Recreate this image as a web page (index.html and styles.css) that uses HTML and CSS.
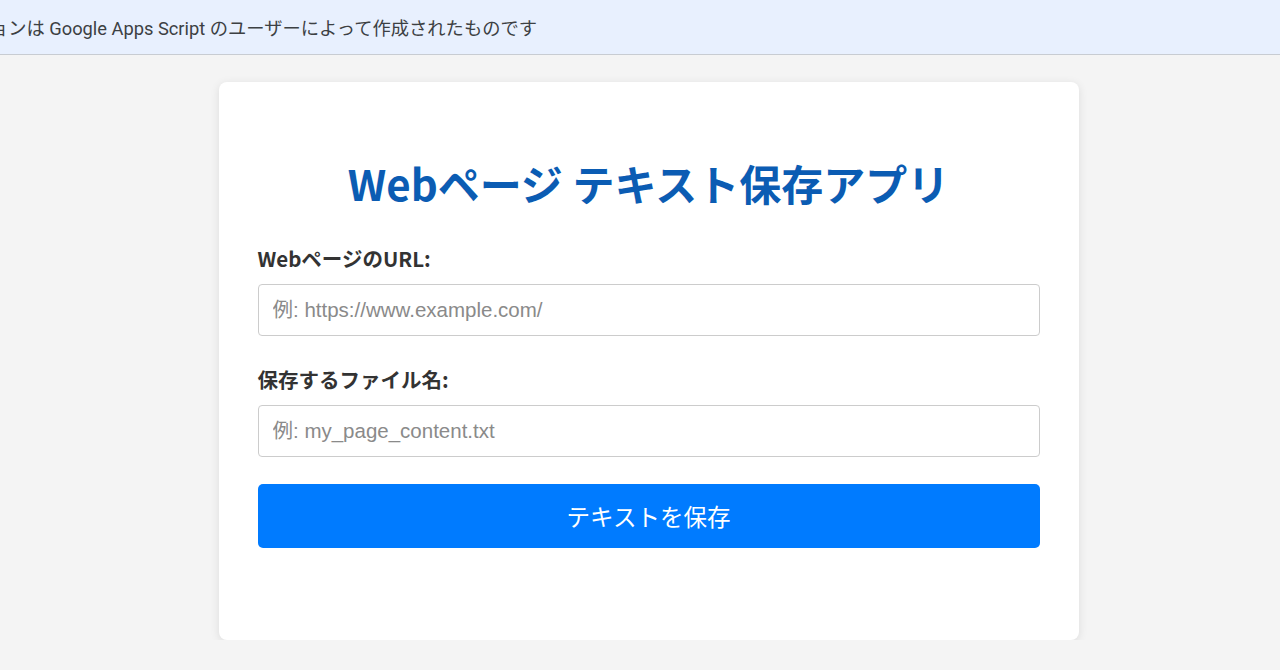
FILE: index.html
```html
<!DOCTYPE html>
<html lang="ja">
<head>
    <meta charset="UTF-8">
    <meta name="viewport" content="width=device-width, initial-scale=1.0">
    <title>Webページ テキスト保存アプリ</title>
    <link rel="stylesheet" href="styles.css">
</head>
<body>

<div class="gas-banner">
    <span class="gas-banner-text">このアプリケーションは Google Apps Script のユーザーによって作成されたものです</span>
</div>

<div class="page">
    <div class="container">
        <h1>Webページ テキスト保存アプリ</h1>

        <form id="saveForm">
            <!-- URL -->
            <label for="url">WebページのURL:</label>
            <input type="url" id="url" name="url" placeholder="例: https://www.example.com/" required>

            <!-- ファイル名 -->
            <label for="fileName">保存するファイル名:</label>
            <input type="text" id="fileName" name="fileName" placeholder="例: my_page_content.txt" required>

            <button type="submit" id="saveBtn">テキストを保存</button>
        </form>
    </div>
</div>

</body>
</html>
```

FILE: styles.css
```css
body {
    margin: 0;
    background-color: #f4f4f4;
    font-family: "Noto Sans CJK JP", "Noto Sans", sans-serif;
    color: #333;
}
.gas-banner {
    height: 55px;
    background-color: #e8f0fe;
    border-bottom: 1px solid #c8ccd2;
    box-sizing: border-box;
    display: flex;
    align-items: center;
    overflow: hidden;
    white-space: nowrap;
}
.gas-banner-text {
    margin-left: -156px;
    font-family: Roboto, "Noto Sans CJK JP", sans-serif;
    font-size: 18.3px;
    color: #3c4043;
}
.page {
    display: flex;
    justify-content: center;
    padding: 27px 0 0 17px;
}
.container {
    width: 860px;
    box-sizing: border-box;
    background-color: #fff;
    padding: 76px 39px 92px;
    border-radius: 8px;
    box-shadow: 0 2px 10px rgba(0, 0, 0, 0.1);
}
h1 {
    margin: 0 0 36px;
    text-align: center;
    color: #0b5cb3;
    font-size: 42px;
    font-weight: bold;
    line-height: 1.2;
}
label {
    display: block;
    font-weight: bold;
    font-size: 20.5px;
    line-height: 1.4;
    margin-bottom: 11px;
}
input[type="url"], input[type="text"] {
    display: block;
    width: 100%;
    box-sizing: border-box;
    height: 52px;
    padding: 0 14px;
    margin-bottom: 29px;
    border: 1px solid #ccc;
    border-radius: 4px;
    font-family: "Liberation Sans", "Noto Sans CJK JP", sans-serif;
    font-size: 20.5px;
}
input::placeholder {
    color: #8a8a8a;
}
button {
    display: block;
    width: 100%;
    height: 64px;
    margin-top: -2px;
    background-color: #007bff;
    color: white;
    border: none;
    border-radius: 5px;
    font-family: "Noto Sans CJK JP", sans-serif;
    font-size: 23.5px;
    cursor: pointer;
}
button:hover {
    background-color: #0069d9;
}
```
